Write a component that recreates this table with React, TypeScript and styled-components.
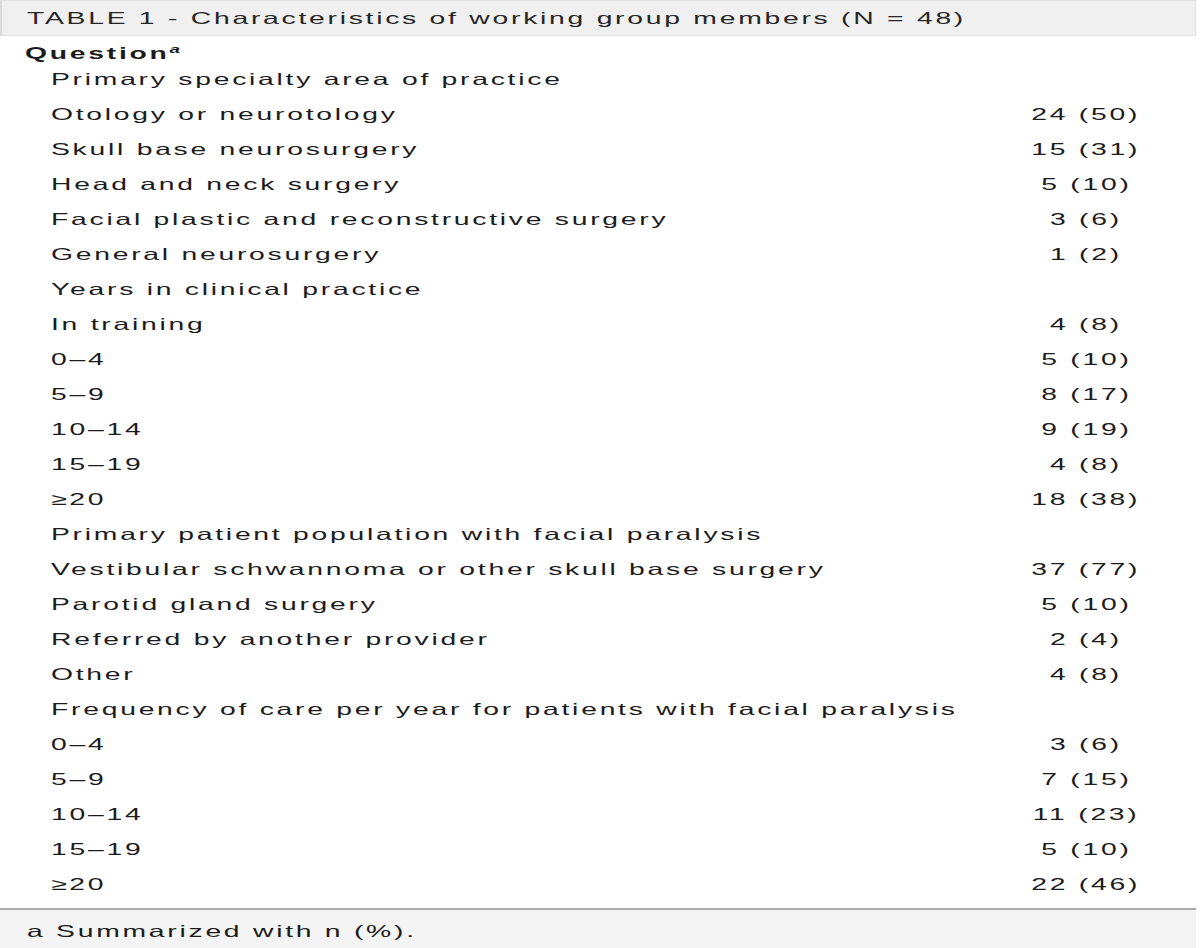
import React from "react";
import styled, { createGlobalStyle } from "styled-components";

const Global = createGlobalStyle`
  html, body { margin: 0; padding: 0; background: #ffffff; }
  body { font-family: "Liberation Sans", Arial, sans-serif; color: #1c1c1c; overflow: hidden; }
`;

const Table = styled.div`
  width: 1196px;
  display: flex;
  flex-direction: column;
`;

const Caption = styled.div`
  height: 36px;
  box-sizing: border-box;
  background: #f0f0f0;
  border: 1px solid #e2e2e2;
  border-left: 2px solid #dadada;
  padding-left: 25px;
  font-size: 16.5px;
  line-height: 34px;
  white-space: nowrap;
  color: #262626;
`;

const Stretch = styled.span<{ $align?: "left" | "center" }>`
  display: inline-block;
  white-space: nowrap;
  letter-spacing: 1.6px;
  transform: scaleX(1.715);
  transform-origin: ${(p) => (p.$align === "center" ? "center" : "left")} center;
`;

const HeadRow = styled.div`
  height: 26px;
  box-sizing: border-box;
  padding: 8px 0 0 25px;
  font-size: 16.5px;
  line-height: 18px;
  font-weight: 700;
`;

const Sup = styled.sup`
  font-size: 11px;
  font-style: italic;
  font-weight: 700;
  vertical-align: 6px;
  line-height: 0;
`;

const Row = styled.div`
  display: grid;
  grid-template-columns: 1fr 220px;
  height: 35px;
  font-size: 16.5px;
  line-height: 35px;
`;

const Label = styled.div`
  padding-left: 51px;
`;

const Value = styled.div`
  text-align: center;
`;

const Footer = styled.div`
  margin-top: 6px;
  border-top: 2px solid #aaaaaa;
  background: #f4f4f4;
  padding: 4px 0 0 27px;
  height: 40px;
  font-size: 16.5px;
  line-height: 35px;
`;

const rows: [string, string][] = [
  ["Primary specialty area of practice", ""],
  ["Otology or neurotology", "24 (50)"],
  ["Skull base neurosurgery", "15 (31)"],
  ["Head and neck surgery", "5 (10)"],
  ["Facial plastic and reconstructive surgery", "3 (6)"],
  ["General neurosurgery", "1 (2)"],
  ["Years in clinical practice", ""],
  ["In training", "4 (8)"],
  ["0–4", "5 (10)"],
  ["5–9", "8 (17)"],
  ["10–14", "9 (19)"],
  ["15–19", "4 (8)"],
  ["≥20", "18 (38)"],
  ["Primary patient population with facial paralysis", ""],
  ["Vestibular schwannoma or other skull base surgery", "37 (77)"],
  ["Parotid gland surgery", "5 (10)"],
  ["Referred by another provider", "2 (4)"],
  ["Other", "4 (8)"],
  ["Frequency of care per year for patients with facial paralysis", ""],
  ["0–4", "3 (6)"],
  ["5–9", "7 (15)"],
  ["10–14", "11 (23)"],
  ["15–19", "5 (10)"],
  ["≥20", "22 (46)"],
];

export default function App() {
  return (
    <>
      <Global />
      <Table>
        <Caption>
          <Stretch>TABLE 1 - Characteristics of working group members (N = 48)</Stretch>
        </Caption>
        <HeadRow>
          <Stretch>
            Question<Sup>a</Sup>
          </Stretch>
        </HeadRow>
        {rows.map(([label, value], i) => (
          <Row key={i}>
            <Label>
              <Stretch>{label}</Stretch>
            </Label>
            <Value>{value && <Stretch $align="center">{value}</Stretch>}</Value>
          </Row>
        ))}
        <Footer>
          <Stretch>a Summarized with n (%).</Stretch>
        </Footer>
      </Table>
    </>
  );
}
